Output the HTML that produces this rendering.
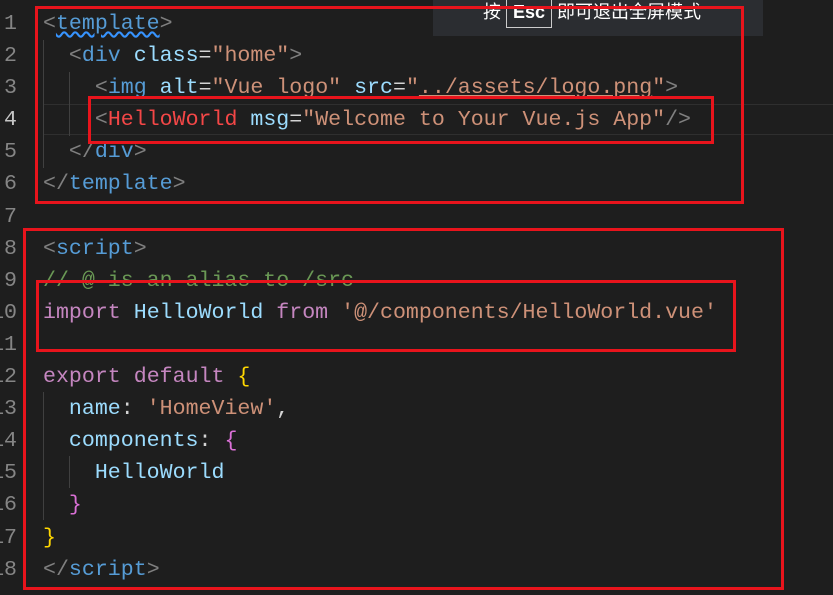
<!DOCTYPE html>
<html><head><meta charset="utf-8"><style>
body{margin:0;width:833px;height:595px;overflow:hidden;background:#1e1e1e;position:relative;font-family:"Liberation Mono",monospace;font-size:21.6px}
.ln{position:absolute;left:-20px;width:37px;text-align:right;color:#858585;line-height:32.1px;top:8px}
.ln div:nth-child(4){color:#c6c6c6}
.code{position:absolute;left:43px;top:8px;line-height:32.1px;white-space:pre;color:#d4d4d4}
.g{color:#808080}.t{color:#569cd6}.a{color:#9cdcfe}.s{color:#ce9178}.r{color:#f44747}.k{color:#c586c0}.c{color:#6a9955}.y{color:#ffd700}.p{color:#da70d6}.v{color:#9cdcfe}
.box{position:absolute;border:3px solid #e8141c;box-sizing:border-box}
.guide{position:absolute;width:1px;background:#404040}
</style></head><body>
<div style="position:absolute;left:43px;top:104px;width:790px;height:31px;border-top:1px solid #2f2f2f;border-bottom:1px solid #2f2f2f;box-sizing:border-box"></div>
<div class="guide" style="left:43px;top:40px;height:128px"></div>
<div class="guide" style="left:69px;top:72px;height:64px"></div>
<div class="guide" style="left:43px;top:392px;height:128px"></div>
<div class="guide" style="left:69px;top:456px;height:32px"></div>
<div class="ln"><div>1</div><div>2</div><div>3</div><div>4</div><div>5</div><div>6</div><div>7</div><div>8</div><div>9</div><div>10</div><div>11</div><div>12</div><div>13</div><div>14</div><div>15</div><div>16</div><div>17</div><div>18</div></div>
<div class="code"><span class="g">&lt;</span><span class="t" style="text-decoration:underline wavy #3794ff">template</span><span class="g">&gt;</span>
  <span class="g">&lt;</span><span class="t">div</span> <span class="a">class</span>=<span class="s">"home"</span><span class="g">&gt;</span>
    <span class="g">&lt;</span><span class="t">img</span> <span class="a">alt</span>=<span class="s">"Vue logo"</span> <span class="a">src</span>=<span class="s">"<u>../assets/logo.png</u>"</span><span class="g">&gt;</span>
    <span class="g">&lt;</span><span class="r">HelloWorld</span> <span class="a">msg</span>=<span class="s">"Welcome to Your Vue.js App"</span><span class="g">/&gt;</span>
  <span class="g">&lt;/</span><span class="t">div</span><span class="g">&gt;</span>
<span class="g">&lt;/</span><span class="t">template</span><span class="g">&gt;</span>

<span class="g">&lt;</span><span class="t">script</span><span class="g">&gt;</span>
<span class="c">// @ is an alias to /src</span>
<span class="k">import</span> <span class="v">HelloWorld</span> <span class="k">from</span> <span class="s">'@/components/HelloWorld.vue'</span>

<span class="k">export</span> <span class="k">default</span> <span class="y">{</span>
  <span class="v">name</span>: <span class="s">'HomeView'</span>,
  <span class="v">components</span>: <span class="p">{</span>
    <span class="v">HelloWorld</span>
  <span class="p">}</span>
<span class="y">}</span>
<span class="g">&lt;/</span><span class="t">script</span><span class="g">&gt;</span></div>
<div style="position:absolute;left:433px;top:0;width:330px;height:36px;background:#2b2d31"></div>
<div style="position:absolute;left:483px;top:-4px;color:#fff;font-family:'Liberation Sans','Noto Sans CJK SC',sans-serif;font-size:18px;white-space:nowrap">按 <span style="display:inline-block;border:1px solid #ccc;padding:0 6px;line-height:30px;font-weight:bold">Esc</span> 即可退出全屏模式</div>
<div class="box" style="left:35px;top:6px;width:709px;height:198px"></div>
<div class="box" style="left:88px;top:96px;width:626px;height:48px"></div>
<div class="box" style="left:23px;top:228px;width:761px;height:362px"></div>
<div class="box" style="left:36px;top:280px;width:700px;height:72px"></div>
</body></html>
